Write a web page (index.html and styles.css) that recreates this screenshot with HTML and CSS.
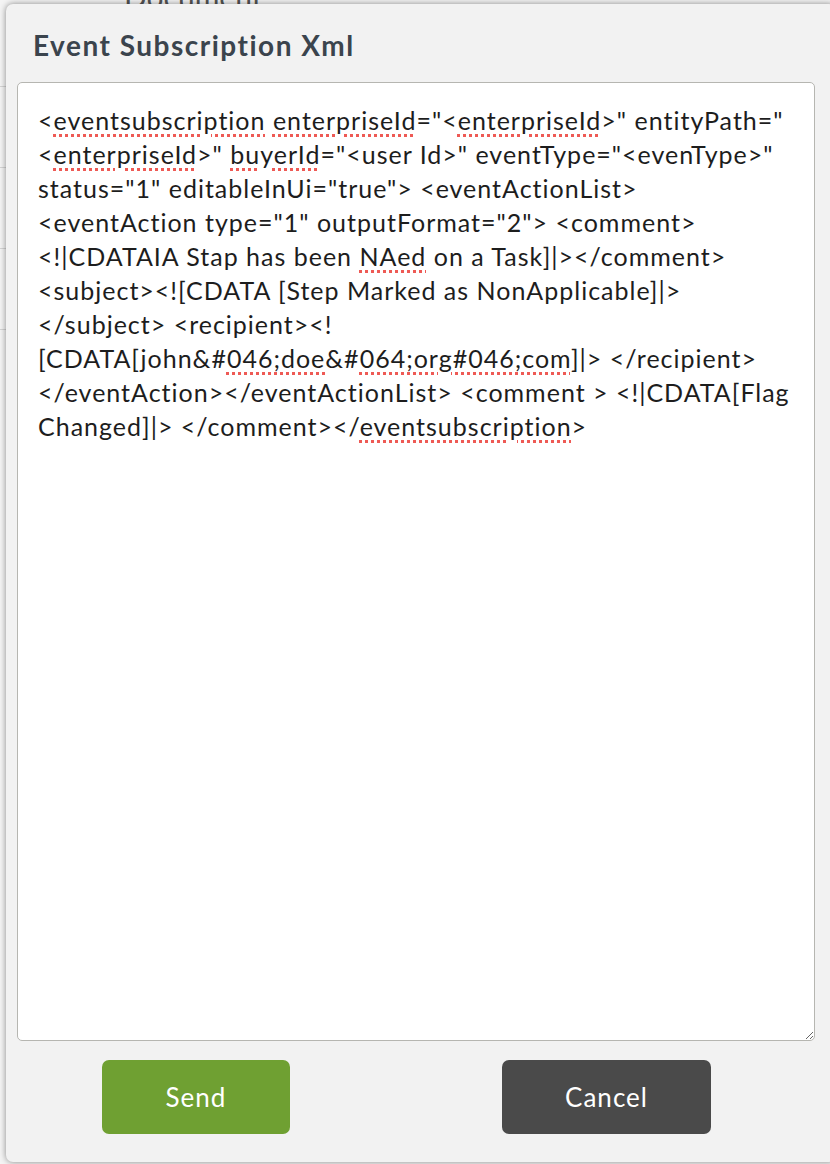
FILE: index.html
```html
<!DOCTYPE html>
<html lang="en">
<head>
    <meta charset="UTF-8">
    <meta name="viewport" content="width=device-width, initial-scale=1.0">
    <title>Event Subscription Xml</title>
    <link rel="stylesheet" href="styles.css">
</head>
<body>
    <div class="page">
        <h2 class="page-title">Document</h2>
        <div class="page-row"></div>
        <div class="page-row"></div>
        <div class="page-row"></div>
        <div class="page-row"></div>
    </div>

    <div class="modal">
        <h1 class="modal-title">Event Subscription Xml</h1>
        <div class="xml-box" contenteditable="true" spellcheck="true">
            <div class="line">&lt;<span class="typo">eventsubscription</span> <span class="typo">enterpriseId</span>="&lt;<span class="typo">enterpriseId</span>&gt;" entityPath="</div>
            <div class="line">&lt;<span class="typo">enterpriseId</span>&gt;" <span class="typo">buyerId</span>="&lt;user Id&gt;" eventType="&lt;evenType&gt;"</div>
            <div class="line">status="1" editableInUi="true"&gt; &lt;eventActionList&gt;</div>
            <div class="line">&lt;eventAction type="1" outputFormat="2"&gt; &lt;comment&gt;</div>
            <div class="line">&lt;!|CDATAIA Stap has been <span class="typo">NAed</span> on a Task]|&gt;&lt;/comment&gt;</div>
            <div class="line">&lt;subject&gt;&lt;![CDATA [Step Marked as NonApplicable]|&gt;</div>
            <div class="line">&lt;/subject&gt; &lt;recipient&gt;&lt;!</div>
            <div class="line">[CDATA[john&amp;#<span class="typo">046;doe</span>&amp;#<span class="typo">064;org#046;com</span>]|&gt; &lt;/recipient&gt;</div>
            <div class="line">&lt;/eventAction&gt;&lt;/eventActionList&gt; &lt;comment &gt; &lt;!|CDATA[Flag</div>
            <div class="line">Changed]|&gt; &lt;/comment&gt;&lt;/<span class="typo">eventsubscription</span>&gt;</div>
        </div>
        <div class="modal-actions">
            <button class="btn btn-send">Send</button>
            <button class="btn btn-cancel">Cancel</button>
        </div>
    </div>
</body>
</html>
```

FILE: styles.css
```css
body {
    margin: 0;
    padding: 0;
    background-color: #f4f4f4;
    font-family: 'Lato', 'Open Sans', sans-serif;
    color: #222;
    height: 1164px;
    overflow: hidden;
}
.page {
    height: 1164px;
}
.page-title {
    margin: 0;
    padding-left: 124px;
    font-size: 30px;
    font-weight: normal;
    line-height: 20px;
    margin-top: -14px;
    color: #555;
}
.page-row {
    height: 80px;
    border-bottom: 1px solid #d4d4d4;
}
.modal {
    position: absolute;
    top: 4px;
    left: 6px;
    width: 830px;
    height: 1158px;
    box-sizing: border-box;
    background-color: #f2f2f2;
    border-radius: 7px;
    box-shadow: 0 0 6px rgba(0, 0, 0, 0.45);
    display: flex;
    flex-direction: column;
}
.modal-title {
    margin: 0;
    padding: 25px 27px 0;
    height: 53px;
    font-size: 28px;
    font-weight: bold;
    line-height: 32px;
    letter-spacing: 1.5px;
    color: #3b444d;
}
.xml-box {
    margin-left: 11px;
    width: 798px;
    height: 959px;
    box-sizing: border-box;
    padding: 20px 20px;
    background-color: #fff;
    border: 1px solid #b6b6b1;
    border-radius: 5px;
    font-size: 25px;
    line-height: 34px;
    letter-spacing: 1px;
    color: #1d1d1d;
    overflow: auto;
    resize: vertical;
    outline: none;
}
.line {
    white-space: nowrap;
}
.typo {
    text-decoration: underline dotted #ee5a55;
    text-decoration-thickness: 3px;
    text-underline-offset: 4px;
}
.modal-actions {
    display: flex;
    gap: 212px;
    padding: 19px 0 0 96px;
}
.btn {
    height: 74px;
    border: none;
    border-radius: 7px;
    color: #fff;
    font-family: 'Lato', 'Open Sans', sans-serif;
    font-size: 26px;
    letter-spacing: 1px;
    cursor: pointer;
}
.btn-send {
    width: 188px;
    background-color: #6fa032;
}
.btn-cancel {
    width: 209px;
    background-color: #4a4a4a;
}
```
